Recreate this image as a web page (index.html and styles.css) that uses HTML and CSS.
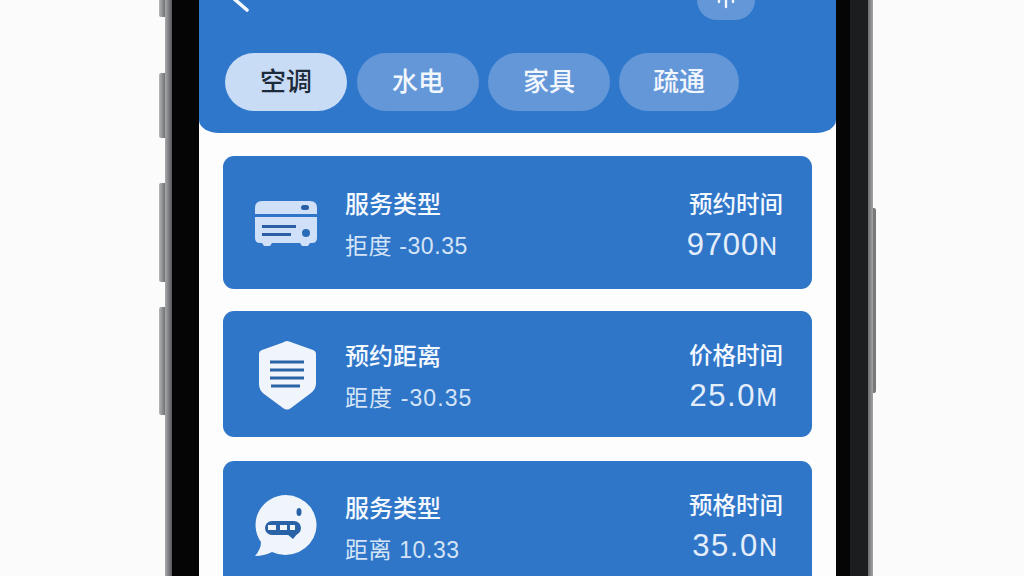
FILE: index.html
```html
<!DOCTYPE html>
<html lang="zh-CN">
<head>
<meta charset="UTF-8">
<meta name="viewport" content="width=device-width, initial-scale=1.0">
<title>服务预约</title>
<link rel="stylesheet" href="styles.css">
</head>
<body>

<div class="phone">
    <span class="side-btn side-1"></span>
    <span class="side-btn side-2"></span>
    <span class="side-btn side-3"></span>
    <span class="side-btn side-4"></span>
    <span class="side-btn side-right"></span>

    <div class="bezel">
        <div class="screen">
            <div class="header">
                <div class="topbar">
                    <svg class="back" width="20" height="20" viewBox="0 0 20 20">
                        <path d="M0 -3 L15 10" fill="none" stroke="#f2f6fd" stroke-width="3.6" stroke-linecap="round"/>
                    </svg>
                    <div class="top-btn">
                        <svg width="24" height="12" viewBox="0 0 24 12">
                            <path d="M12 0 V7 M5 0 V2 M19 0 V2" fill="none" stroke="#f2f6fd" stroke-width="2.4" stroke-linecap="round"/>
                        </svg>
                    </div>
                </div>
                <div class="tabs">
                    <div class="tab tab-active">空调</div>
                    <div class="tab">水电</div>
                    <div class="tab tab-third">家具</div>
                    <div class="tab tab-last">疏通</div>
                </div>
            </div>

            <div class="list">
                <div class="card card-1">
                    <div class="icon">
                        <svg width="64" height="48" viewBox="0 0 64 48">
                            <path d="M1 9 Q1 2 8 2 H56 Q63 2 63 9 V15 H1 Z" fill="#cfe0f8"/>
                            <path d="M1 18 H63 V39 Q63 44 58 44 H56 L54 47 H48 L46 44 H18 L16 47 H10 L8 44 H6 Q1 44 1 39 Z" fill="#cfe0f8"/>
                            <rect x="47" y="6" width="8" height="5" rx="2.5" fill="#2a5fa8"/>
                            <rect x="8" y="26" width="34" height="3" fill="#2a5fa8"/>
                            <rect x="8" y="34" width="29" height="3" fill="#2a5fa8"/>
                            <circle cx="52" cy="34" r="4" fill="#2b6cb8"/>
                        </svg>
                    </div>
                    <div class="info">
                        <div class="title">服务类型</div>
                        <div class="sub">拒度 -30.35</div>
                    </div>
                    <div class="meta">
                        <div class="meta-label">预约时间</div>
                        <div class="meta-value">9700<span class="unit">N</span></div>
                    </div>
                </div>

                <div class="card card-2">
                    <div class="icon">
                        <svg width="60" height="70" viewBox="0 0 60 70">
                            <path d="M29 0 Q31 0 34 1.5 L55 9 Q58 10 58 13 V42 Q58 48 53 52 L33 67 Q29 70 25 67 L6 53 Q1 49 1 43 V13 Q1 10 4 9 L25 1.5 Q27 0 29 0 Z" fill="#f0f4fb"/>
                            <path d="M12 21 H46 M12 29 H46 M12 37 H46 M13 45 H42" fill="none" stroke="#2a62a8" stroke-width="3"/>
                        </svg>
                    </div>
                    <div class="info">
                        <div class="title">预约距离</div>
                        <div class="sub sub-wide">距度 -30.35</div>
                    </div>
                    <div class="meta">
                        <div class="meta-label">价格时间</div>
                        <div class="meta-value">25.0<span class="unit">M</span></div>
                    </div>
                </div>

                <div class="card card-3">
                    <div class="icon">
                        <svg width="64" height="62" viewBox="0 0 64 62">
                            <path d="M32 0 A31 30 0 1 1 18 57 Q10 61 1 61 Q7 54 7 47 A31 30 0 0 1 32 0 Z" fill="#f0f4fb"/>
                            <rect x="11" y="26" width="36" height="14" rx="7" fill="#2a62a8"/>
                            <rect x="14" y="30" width="8" height="5" fill="#f0f4fb"/>
                            <rect x="26" y="30" width="7" height="5" fill="#f0f4fb"/>
                            <rect x="36" y="30" width="5" height="5" fill="#f0f4fb"/>
                            <path d="M33 39 L39 44 L44 38" fill="#2a62a8"/>
                            <ellipse cx="45" cy="17" rx="2.5" ry="4" fill="#2a62a8"/>
                        </svg>
                    </div>
                    <div class="info">
                        <div class="title">服务类型</div>
                        <div class="sub">距离 10.33</div>
                    </div>
                    <div class="meta">
                        <div class="meta-label">预格时间</div>
                        <div class="meta-value">35.0<span class="unit">N</span></div>
                    </div>
                </div>
            </div>
        </div>
    </div>
</div>

</body>
</html>
```

FILE: styles.css
```css
html, body {
    height: 576px;
    margin: 0;
    overflow: hidden;
}
body {
    background-color: #fbfbfb;
    font-family: "Liberation Sans", "Noto Sans CJK SC", sans-serif;
}
.phone {
    position: relative;
    width: 708px;
    height: 576px;
    margin-left: 165px;
    box-sizing: border-box;
    padding: 0 5px 0 7px;
    background: linear-gradient(90deg, #a8aaac 0, #55575a 7px, #55575a 701px, #a2a4a6 708px);
}
.side-btn {
    position: absolute;
    left: -6px;
    width: 6px;
    background: linear-gradient(90deg, #b5b6b7, #6f7173);
    border-radius: 2px 0 0 2px;
}
.side-1 { top: -5px; height: 22px; }
.side-2 { top: 73px; height: 65px; }
.side-3 { top: 183px; height: 99px; }
.side-4 { top: 307px; height: 108px; }
.side-right {
    left: auto;
    right: -3px;
    top: 208px;
    height: 185px;
    width: 3px;
    border-radius: 0 2px 2px 0;
    background: #77797b;
}
.bezel {
    height: 576px;
    background-color: #050505;
    border-right: 18px solid #1c1d1e;
    padding: 0 14px 0 27px;
}
.screen {
    height: 576px;
    width: 637px;
    background-color: #fdfdfd;
    overflow: hidden;
}
.header {
    height: 133px;
    box-sizing: border-box;
    padding-left: 26px;
    background-color: #2f77cb;
    border-radius: 0 0 20px 20px / 0 0 13px 13px;
}
.topbar {
    height: 20px;
    display: flex;
    justify-content: space-between;
    padding-left: 7px;
    padding-right: 81px;
}
.back {
    display: block;
}
.top-btn {
    width: 58px;
    height: 20px;
    display: flex;
    justify-content: center;
    background-color: #6397d8;
    border-radius: 0 0 20px 20px;
}
.top-btn svg {
    display: block;
}
.tabs {
    display: flex;
    gap: 10px;
    margin-top: 33px;
}
.tab {
    width: 122px;
    height: 58px;
    line-height: 59px;
    text-align: center;
    font-size: 26px;
    font-weight: 500;
    color: #f2f6fd;
    background-color: #6397d8;
    border-radius: 29px;
}
.tab-active {
    color: #1d2a3a;
    background-color: #c9dcf6;
}
.tab-third {
    margin-left: -1px;
}
.tab-last {
    width: 120px;
    margin-left: -1px;
}
.list {
    display: flex;
    flex-direction: column;
    gap: 22px;
    padding: 23px 24px 0;
}
.card {
    display: flex;
    align-items: center;
    flex-shrink: 0;
    box-sizing: border-box;
    padding: 6px 29px 0 0;
    background-color: #2f76c8;
    border-radius: 11px;
}
.card-1 { height: 133px; }
.card-2 { height: 126px; padding-top: 7px; margin-bottom: 2px; }
.card-3 { height: 140px; padding-top: 0; padding-bottom: 4px; }
.icon {
    width: 122px;
    display: flex;
    justify-content: center;
    padding-left: 4px;
    box-sizing: border-box;
}
.card-1 .icon { margin-bottom: 6px; }
.card-2 .icon { margin-bottom: 4px; padding-left: 8px; }
.card-3 .icon { margin-bottom: 6px; }
.icon svg {
    display: block;
}
.info {
    flex: 1;
}
.title {
    font-size: 24px;
    font-weight: 500;
    line-height: 34px;
    color: #f4f8ff;
}
.sub {
    margin-top: 7px;
    font-size: 23px;
    letter-spacing: 0.6px;
    line-height: 34px;
    color: #d5e4f7;
}
.sub-wide {
    letter-spacing: 1.1px;
}
.meta {
    margin-bottom: 3px;
    text-align: right;
}
.card-1 .meta { margin-bottom: 1px; }
.card-3 .meta { margin-bottom: 5px; }
.meta-label {
    font-size: 23.5px;
    font-weight: 500;
    line-height: 34px;
    color: #f4f8ff;
}
.meta-value {
    margin-top: 6px;
    padding-right: 6px;
    font-size: 31px;
    letter-spacing: 0.8px;
    line-height: 34px;
    color: #e4eefb;
}
.card-2 .meta-value,
.card-3 .meta-value {
    letter-spacing: 1.6px;
}
.unit {
    font-size: 25px;
    letter-spacing: 0;
}
```
